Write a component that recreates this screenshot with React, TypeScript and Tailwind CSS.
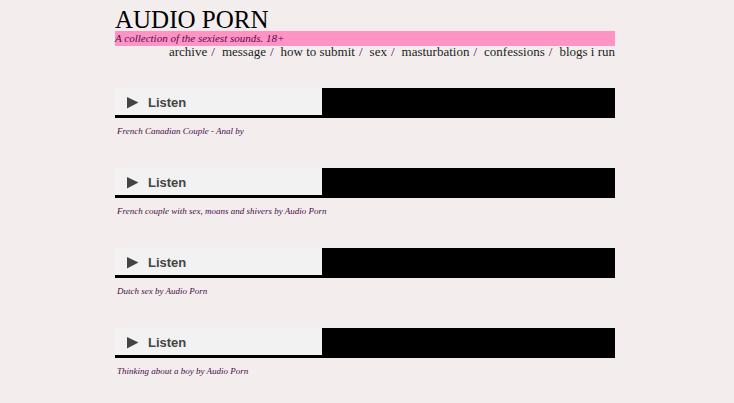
const links = [
  "archive",
  "message",
  "how to submit",
  "sex",
  "masturbation",
  "confessions",
  "blogs i run",
];

const posts = [
  "French Canadian Couple - Anal by",
  "French couple with sex, moans and shivers by Audio Porn",
  "Dutch sex by Audio Porn",
  "Thinking about a boy by Audio Porn",
];

function Player() {
  return (
    <div className="flex h-[30px] bg-black">
      <button
        type="button"
        className="flex h-[27px] w-[207px] items-center gap-[9px] bg-[#f2f2f2] pl-3 pt-0.5 font-['Liberation_Sans',sans-serif] text-[13px] font-bold text-[#444]"
      >
        <svg width="12" height="12" viewBox="0 0 12 12" fill="currentColor" aria-hidden="true">
          <path d="M0 0L11.5 5.5L0 11.5Z" />
        </svg>
        Listen
      </button>
    </div>
  );
}

export default function App() {
  return (
    <div className="min-h-screen bg-[#f3eeed] pr-1 font-['Liberation_Serif',serif]">
      <div className="mx-auto max-w-[500px]">
        <header>
          <h1 className="pt-2 text-[25px] leading-[23px] text-black">AUDIO PORN</h1>
          <p className="bg-[#ff93c4] text-[11px] leading-[15px] text-[#5a0850] italic">
            A collection of the sexiest sounds. 18+
          </p>
          <nav className="flex flex-wrap justify-end gap-x-[7px] text-[13px] leading-[11px] text-[#222]">
            {links.map((link, i) => (
              <span key={link} className="flex gap-1">
                <a href="#">{link}</a>
                {i < links.length - 1 && <span className="text-[#5a0850]">/</span>}
              </span>
            ))}
          </nav>
        </header>
        <main className="mt-[31px] flex flex-col gap-[30px]">
          {posts.map((post) => (
            <article key={post}>
              <Player />
              <p className="px-0.5 pt-1.5 text-[9px] leading-[14px] text-[#4a0a4a] italic">{post}</p>
            </article>
          ))}
        </main>
      </div>
    </div>
  );
}
